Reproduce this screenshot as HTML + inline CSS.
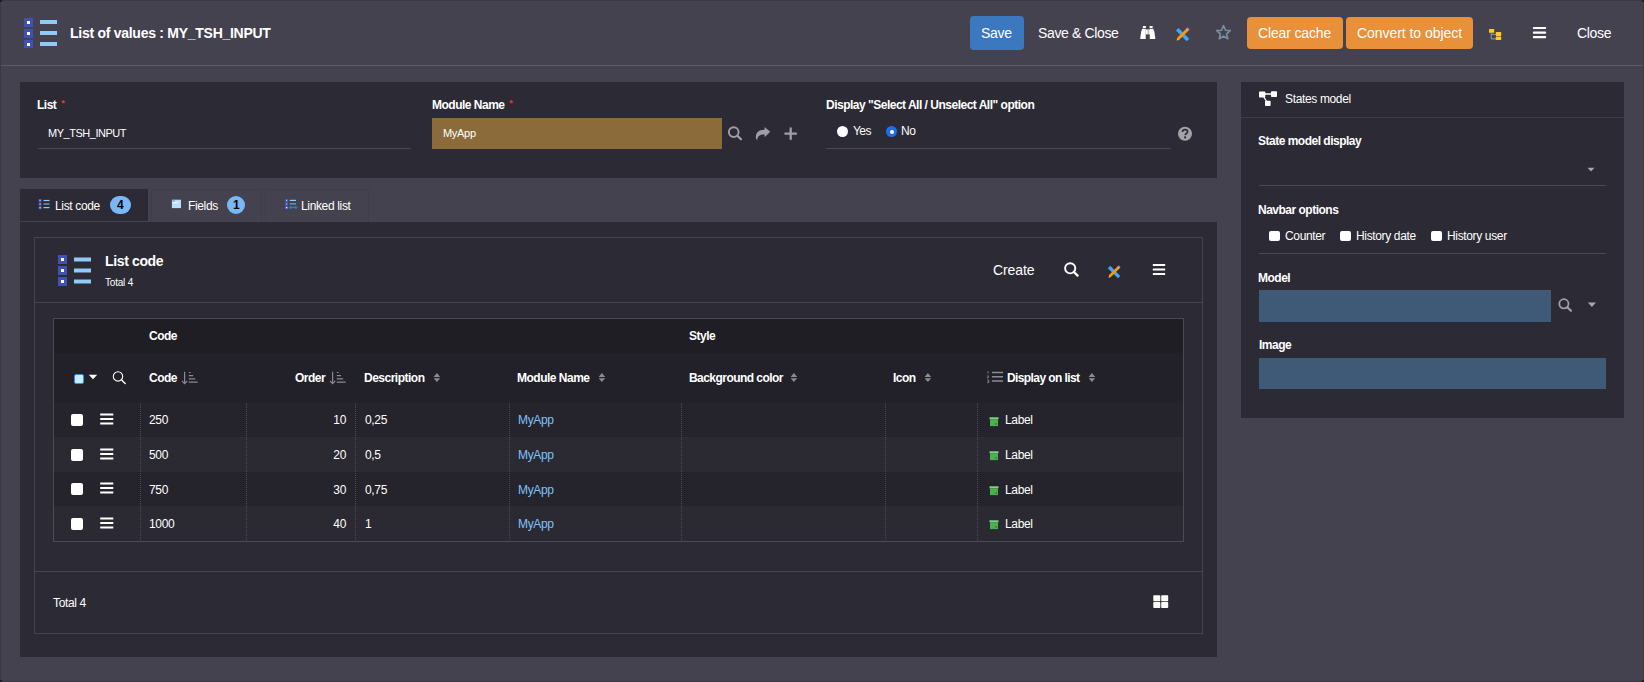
<!DOCTYPE html>
<html><head><meta charset="utf-8">
<style>
*{box-sizing:border-box;margin:0;padding:0}
html,body{width:1644px;height:682px;overflow:hidden;background:#45424f;font-family:"Liberation Sans",sans-serif;color:#fff}
.a{position:absolute}
.t{position:absolute;line-height:1;white-space:nowrap}
.b{font-weight:700}
.s12{font-size:12px;letter-spacing:-0.35px}
.b12{font-size:12px;font-weight:700;letter-spacing:-0.5px}
.s14{font-size:14px;letter-spacing:-0.3px}
.panel{position:absolute;background:#2c2a34}
.ln{position:absolute;height:1px;background:#4b4956}
.vl{position:absolute;width:1px;background:#4b4956}
.btn{position:absolute;border-radius:4px}
</style></head><body>
<div class="a" style="left:0;top:0;width:1644px;height:682px;border:1px solid #3a3843"></div>

<!-- HEADER -->
<svg class="a" style="left:24px;top:18px" width="34" height="30" viewBox="0 0 34 30">
  <rect x="0" y="0" width="9" height="9" fill="#3f51b5"/><rect x="3" y="3" width="3" height="3" fill="#fff"/>
  <rect x="0" y="11" width="9" height="9" fill="#3f51b5"/><rect x="3" y="14" width="3" height="3" fill="#fff"/>
  <rect x="0" y="22" width="9" height="9" fill="#3f51b5"/><rect x="3" y="25" width="3" height="3" fill="#fff"/>
  <rect x="16" y="2" width="17" height="4" fill="#90caf9"/>
  <rect x="16" y="13" width="17" height="4" fill="#90caf9"/>
  <rect x="16" y="24" width="17" height="4" fill="#90caf9"/>
</svg>
<div class="t b" style="left:70px;top:26px;font-size:14px;letter-spacing:-0.27px">List of values : MY_TSH_INPUT</div>

<div class="btn" style="left:970px;top:16px;width:54px;height:34px;background:#3c78c0"></div>
<div class="t s14" style="left:981px;top:26px">Save</div>
<div class="t s14" style="left:1038px;top:26px;letter-spacing:-0.36px">Save &amp; Close</div>
<div class="btn" style="left:1247px;top:17px;width:96px;height:32px;background:#e8903a"></div>
<div class="t s14" style="left:1258px;top:26px;letter-spacing:-0.15px">Clear cache</div>
<div class="btn" style="left:1346px;top:17px;width:127px;height:32px;background:#e8903a"></div>
<div class="t s14" style="left:1357px;top:26px;letter-spacing:-0.05px">Convert to object</div>
<div class="t s14" style="left:1577px;top:26px">Close</div>

<div class="ln" style="left:1px;top:65px;width:1642px;background:#5d5b68"></div>


<!-- header icons -->
<svg class="a" style="left:1140px;top:25px" width="16" height="15" viewBox="0 0 16 15">
  <rect x="2.9" y="1" width="3" height="2" fill="#fff"/>
  <rect x="9.6" y="1" width="3" height="2" fill="#fff"/>
  <path d="M2.2 3.7 L5.7 3.7 L5.7 14 L0.9 14 Q0.1 14 0.2 13 L1.2 6.5 Z" fill="#fff"/>
  <path d="M13.2 3.7 L9.8 3.7 L9.8 14 L14.6 14 Q15.4 14 15.3 13 L14.3 6.5 Z" fill="#fff"/>
  <rect x="5.6" y="4.5" width="4.3" height="4.8" fill="#fff"/>
  <rect x="7.5" y="4.5" width="1.5" height="4.8" fill="#b9b9bf"/>
</svg>
<svg class="a" style="left:1175px;top:27px" width="15" height="15" viewBox="0 0 15 15">
  <path d="M2.2 2.2 L13 13" stroke="#42a5f5" stroke-width="3.6"/>
  <path d="M3.2 11.8 L11.8 3.2" stroke="#ff9800" stroke-width="2.9"/>
  <path d="M11.6 3.4 L12.8 2.2" stroke="#b0bec5" stroke-width="2.9"/>
  <path d="M12.6 2.4 L13.6 1.4" stroke="#ef6c6c" stroke-width="2.9"/>
  <path d="M1.6 13.6 L2.3 10.8 L4.4 12.9 Z" fill="#ffc107"/>
</svg>
<svg class="a" style="left:1215px;top:24px" width="17" height="17" viewBox="0 0 17 17">
  <path d="M8.5 1.6 L10.5 6.2 L15.3 6.6 L11.6 9.8 L12.8 14.7 L8.5 12.1 L4.2 14.7 L5.4 9.8 L1.7 6.6 L6.5 6.2 Z" fill="none" stroke="#7b8fa2" stroke-width="1.6" stroke-linejoin="round"/>
</svg>
<svg class="a" style="left:1488px;top:28px" width="14" height="13" viewBox="0 0 14 13">
  <path d="M3.2 4.5 V10.9 H8 M3.2 6.3 H8" fill="none" stroke="#9aa9b8" stroke-width="0.9"/>
  <rect x="1" y="1" width="5.2" height="3.8" rx="0.6" fill="#ffc928"/>
  <rect x="7.8" y="4" width="5.4" height="3.9" rx="0.6" fill="#ffc928"/>
  <rect x="7.8" y="8.6" width="5.4" height="3.5" rx="0.6" fill="#ffc928"/>
</svg>
<svg class="a" style="left:1532px;top:26px" width="15" height="14" viewBox="0 0 15 14">
  <rect x="0.8" y="0.9" width="13.4" height="2.2" rx="1" fill="#fff"/>
  <rect x="0.8" y="5.5" width="13.4" height="2.2" rx="1" fill="#fff"/>
  <rect x="0.8" y="10" width="13.4" height="2.2" rx="1" fill="#fff"/>
</svg>

<!-- FORM PANEL -->
<div class="panel" style="left:20px;top:82px;width:1197px;height:96px"></div>
<div class="t b12" style="left:37px;top:99px">List <span style="color:#e53935;font-size:9px;vertical-align:3px;margin-left:2px">*</span></div>
<div class="t" style="left:48px;top:128px;font-size:11px;letter-spacing:-0.48px">MY_TSH_INPUT</div>
<div class="ln" style="left:38px;top:148px;width:373px"></div>
<div class="t b12" style="left:432px;top:99px">Module Name <span style="color:#e53935;font-size:9px;vertical-align:3px;margin-left:2px">*</span></div>
<div class="a" style="left:432px;top:118px;width:290px;height:31px;background:#8c6b3b"></div>
<div class="t" style="left:443px;top:128px;font-size:11px;letter-spacing:-0.3px">MyApp</div>
<div class="t b12" style="left:826px;top:99px">Display "Select All / Unselect All" option</div>
<div class="a" style="left:837px;top:126px;width:11px;height:11px;border-radius:50%;background:#fff"></div>
<div class="t s12" style="left:853px;top:125px;letter-spacing:-0.6px">Yes</div>
<div class="a" style="left:886px;top:126px;width:11px;height:11px;border-radius:50%;background:#1e6ff0"></div>
<div class="a" style="left:889.5px;top:129.5px;width:4px;height:4px;border-radius:50%;background:#fff"></div>
<div class="t s12" style="left:901px;top:125px">No</div>
<div class="ln" style="left:826px;top:148px;width:345px"></div>

<!-- RIGHT PANEL -->
<div class="panel" style="left:1241px;top:82px;width:383px;height:336px"></div>
<div class="ln" style="left:1241px;top:117px;width:383px;background:#3f3d49"></div>
<div class="t s12" style="left:1285px;top:93px">States model</div>
<div class="t b12" style="left:1258px;top:135px">State model display</div>
<div class="ln" style="left:1259px;top:185px;width:347px"></div>
<div class="t b12" style="left:1258px;top:204px">Navbar options</div>
<div class="a" style="left:1269px;top:231px;width:11px;height:10px;border-radius:2px;background:#fff"></div>
<div class="t s12" style="left:1285px;top:230px">Counter</div>
<div class="a" style="left:1340px;top:231px;width:11px;height:10px;border-radius:2px;background:#fff"></div>
<div class="t s12" style="left:1356px;top:230px">History date</div>
<div class="a" style="left:1431px;top:231px;width:11px;height:10px;border-radius:2px;background:#fff"></div>
<div class="t s12" style="left:1447px;top:230px">History user</div>
<div class="ln" style="left:1259px;top:253px;width:347px"></div>
<div class="t b12" style="left:1258px;top:272px">Model</div>
<div class="a" style="left:1259px;top:290px;width:292px;height:32px;background:#3e5a77"></div>
<div class="t b12" style="left:1259px;top:339px">Image</div>
<div class="a" style="left:1259px;top:358px;width:347px;height:31px;background:#3e5a77"></div>

<!-- TABS -->
<div class="a" style="left:20px;top:189px;width:128px;height:32px;background:#2c2a34"></div>
<div class="a" style="left:151px;top:189px;width:111px;height:33px;border:1px solid #3f3d49;border-bottom:0"></div>
<div class="a" style="left:265px;top:189px;width:104px;height:33px;border:1px solid #3f3d49;border-bottom:0"></div>
<div class="t s12" style="left:55px;top:200px">List code</div>
<div class="a" style="left:110px;top:196px;width:21px;height:18px;border-radius:9px;background:#7ab8f5"></div>
<div class="t b" style="left:117px;top:199px;font-size:12px;color:#000">4</div>
<div class="t s12" style="left:188px;top:200px">Fields</div>
<div class="a" style="left:227px;top:196px;width:18px;height:18px;border-radius:9px;background:#7ab8f5"></div>
<div class="t b" style="left:233px;top:199px;font-size:12px;color:#000">1</div>
<div class="t s12" style="left:301px;top:200px">Linked list</div>

<!-- TAB CONTENT -->
<div class="panel" style="left:20px;top:222px;width:1197px;height:435px"></div>
<div class="a" style="left:34px;top:237px;width:1169px;height:397px;border:1px solid #45434f"></div>
<div class="ln" style="left:35px;top:302px;width:1167px;background:#45434f"></div>
<div class="ln" style="left:35px;top:571px;width:1167px;background:#45434f"></div>
<div class="t b" style="left:105px;top:254px;font-size:14px;letter-spacing:-0.36px">List code</div>
<div class="t" style="left:105px;top:278px;font-size:10px;letter-spacing:-0.2px">Total 4</div>
<div class="t s14" style="left:993px;top:263px;letter-spacing:-0.1px">Create</div>
<div class="t s12" style="left:53px;top:597px">Total 4</div>

<!-- TABLE -->
<div class="a" style="left:53px;top:318px;width:1131px;height:224px;border:1px solid #4b4956;background:#25242c"></div>
<div class="a" style="left:54px;top:319px;width:1129px;height:34px;background:#1f1e25"></div>
<div class="a" style="left:54px;top:353px;width:1129px;height:50px;background:#222129"></div>
<div class="a" style="left:54px;top:437px;width:1129px;height:35px;background:#2b2a33"></div>
<div class="a" style="left:54px;top:506px;width:1129px;height:35px;background:#2b2a33"></div>
<div class="t b12" style="left:149px;top:330px">Code</div>
<div class="t b12" style="left:689px;top:330px">Style</div>
<div class="t b12" style="left:149px;top:372px">Code</div>
<div class="t b12" style="left:295px;top:372px">Order</div>
<div class="t b12" style="left:364px;top:372px">Description</div>
<div class="t b12" style="left:517px;top:372px">Module Name</div>
<div class="t b12" style="left:689px;top:372px;letter-spacing:-0.55px">Background color</div>
<div class="t b12" style="left:893px;top:372px">Icon</div>
<div class="t b12" style="left:1007px;top:372px;letter-spacing:-0.6px">Display on list</div>

<!-- TABLE BODY -->
<div class="a" style="left:140px;top:403px;width:1px;height:138px;background:repeating-linear-gradient(to bottom,#4d4b58 0 1px,transparent 1px 2px)"></div>
<div class="a" style="left:246px;top:403px;width:1px;height:138px;background:repeating-linear-gradient(to bottom,#4d4b58 0 1px,transparent 1px 2px)"></div>
<div class="a" style="left:355px;top:403px;width:1px;height:138px;background:repeating-linear-gradient(to bottom,#4d4b58 0 1px,transparent 1px 2px)"></div>
<div class="a" style="left:509px;top:403px;width:1px;height:138px;background:repeating-linear-gradient(to bottom,#4d4b58 0 1px,transparent 1px 2px)"></div>
<div class="a" style="left:681px;top:403px;width:1px;height:138px;background:repeating-linear-gradient(to bottom,#4d4b58 0 1px,transparent 1px 2px)"></div>
<div class="a" style="left:885px;top:403px;width:1px;height:138px;background:repeating-linear-gradient(to bottom,#4d4b58 0 1px,transparent 1px 2px)"></div>
<div class="a" style="left:977px;top:403px;width:1px;height:138px;background:repeating-linear-gradient(to bottom,#4d4b58 0 1px,transparent 1px 2px)"></div>
<div class="a" style="left:74px;top:374px;width:10px;height:10px;border:1.5px solid #2196f3;border-radius:2px;background:#cfeafc"></div>
<svg class="a" style="left:88px;top:374px" width="10" height="6" viewBox="0 0 10 6"><path d="M0.8 0.8 H9.2 L5 5.2 Z" fill="#fff"/></svg>
<svg class="a" style="left:111px;top:370px" width="16" height="16" viewBox="0 0 16 16">
  <circle cx="7" cy="6.4" r="4.7" fill="none" stroke="#fff" stroke-width="1.1"/>
  <path d="M10.6 9.9 L14.2 13.5" stroke="#fff" stroke-width="1.4" stroke-linecap="round"/>
</svg>
<svg class="a" style="left:181px;top:371px" width="17" height="14" viewBox="0 0 17 14">
  <path d="M3.6 0.8 V12.6 M0.9 9.8 L3.6 12.6 L6.3 9.8" fill="none" stroke="#8a8990" stroke-width="1.2"/>
  <path d="M7.8 1.5 H9.6 M7.8 4.6 H12.1 M7.8 7.9 H14.2 M7.8 11.2 H16.7" stroke="#8a8990" stroke-width="1.2"/>
</svg>
<svg class="a" style="left:329px;top:371px" width="17" height="14" viewBox="0 0 17 14">
  <path d="M3.6 0.8 V12.6 M0.9 9.8 L3.6 12.6 L6.3 9.8" fill="none" stroke="#8a8990" stroke-width="1.2"/>
  <path d="M7.8 1.5 H9.6 M7.8 4.6 H12.1 M7.8 7.9 H14.2 M7.8 11.2 H16.7" stroke="#8a8990" stroke-width="1.2"/>
</svg>
<svg class="a" style="left:433px;top:372px" width="8" height="11" viewBox="0 0 8 11">
  <path d="M0.6 4.9 L3.9 0.9 L7.2 4.9 Z M0.6 6.2 L3.9 10.1 L7.2 6.2 Z" fill="#8d8c93"/>
</svg>
<svg class="a" style="left:598px;top:372px" width="8" height="11" viewBox="0 0 8 11">
  <path d="M0.6 4.9 L3.9 0.9 L7.2 4.9 Z M0.6 6.2 L3.9 10.1 L7.2 6.2 Z" fill="#8d8c93"/>
</svg>
<svg class="a" style="left:790px;top:372px" width="8" height="11" viewBox="0 0 8 11">
  <path d="M0.6 4.9 L3.9 0.9 L7.2 4.9 Z M0.6 6.2 L3.9 10.1 L7.2 6.2 Z" fill="#8d8c93"/>
</svg>
<svg class="a" style="left:924px;top:372px" width="8" height="11" viewBox="0 0 8 11">
  <path d="M0.6 4.9 L3.9 0.9 L7.2 4.9 Z M0.6 6.2 L3.9 10.1 L7.2 6.2 Z" fill="#8d8c93"/>
</svg>
<svg class="a" style="left:1088px;top:372px" width="8" height="11" viewBox="0 0 8 11">
  <path d="M0.6 4.9 L3.9 0.9 L7.2 4.9 Z M0.6 6.2 L3.9 10.1 L7.2 6.2 Z" fill="#8d8c93"/>
</svg>
<svg class="a" style="left:986px;top:370px" width="18" height="14" viewBox="0 0 18 14">
  <path d="M2 1 V3.6 M1.2 6 H2.8 L1.2 8 H2.8 M1.2 10.2 H2.8 V12.6 H1.2 M1.6 11.4 H2.8" fill="none" stroke="#8c8b92" stroke-width="0.8"/>
  <path d="M5.9 2.5 H17 M5.9 6.8 H17 M5.9 11.1 H17" stroke="#8c8b92" stroke-width="1.5"/>
</svg>
<div class="a" style="left:71px;top:414px;width:12px;height:12px;border-radius:2px;background:#fff"></div>
<svg class="a" style="left:100px;top:413px" width="14" height="13" viewBox="0 0 14 13"><path d="M0.2 1.6 H13.3 M0.2 6.1 H13.3 M0.2 10.6 H13.3" stroke="#fff" stroke-width="2"/></svg>
<div class="t s12" style="left:149px;top:414px">250</div>
<div class="t s12" style="left:246px;width:100px;text-align:right;top:414px">10</div>
<div class="t s12" style="left:365px;top:414px">0,25</div>
<div class="t s12" style="left:518px;top:414px;color:#7fc2f8">MyApp</div>
<svg class="a" style="left:989px;top:417px" width="10" height="10" viewBox="0 0 10 10">
  <rect x="0.5" y="0.3" width="9" height="2" fill="#81d28a"/>
  <rect x="1" y="2.3" width="8" height="6.8" fill="#4caf50"/>
  <rect x="6.3" y="6.2" width="1.6" height="1.6" fill="#2e7d32"/>
</svg>
<div class="t s12" style="left:1005px;top:414px">Label</div>
<div class="a" style="left:71px;top:449px;width:12px;height:12px;border-radius:2px;background:#fff"></div>
<svg class="a" style="left:100px;top:448px" width="14" height="13" viewBox="0 0 14 13"><path d="M0.2 1.6 H13.3 M0.2 6.1 H13.3 M0.2 10.6 H13.3" stroke="#fff" stroke-width="2"/></svg>
<div class="t s12" style="left:149px;top:449px">500</div>
<div class="t s12" style="left:246px;width:100px;text-align:right;top:449px">20</div>
<div class="t s12" style="left:365px;top:449px">0,5</div>
<div class="t s12" style="left:518px;top:449px;color:#7fc2f8">MyApp</div>
<svg class="a" style="left:989px;top:451px" width="10" height="10" viewBox="0 0 10 10">
  <rect x="0.5" y="0.3" width="9" height="2" fill="#81d28a"/>
  <rect x="1" y="2.3" width="8" height="6.8" fill="#4caf50"/>
  <rect x="6.3" y="6.2" width="1.6" height="1.6" fill="#2e7d32"/>
</svg>
<div class="t s12" style="left:1005px;top:449px">Label</div>
<div class="a" style="left:71px;top:483px;width:12px;height:12px;border-radius:2px;background:#fff"></div>
<svg class="a" style="left:100px;top:482px" width="14" height="13" viewBox="0 0 14 13"><path d="M0.2 1.6 H13.3 M0.2 6.1 H13.3 M0.2 10.6 H13.3" stroke="#fff" stroke-width="2"/></svg>
<div class="t s12" style="left:149px;top:484px">750</div>
<div class="t s12" style="left:246px;width:100px;text-align:right;top:484px">30</div>
<div class="t s12" style="left:365px;top:484px">0,75</div>
<div class="t s12" style="left:518px;top:484px;color:#7fc2f8">MyApp</div>
<svg class="a" style="left:989px;top:486px" width="10" height="10" viewBox="0 0 10 10">
  <rect x="0.5" y="0.3" width="9" height="2" fill="#81d28a"/>
  <rect x="1" y="2.3" width="8" height="6.8" fill="#4caf50"/>
  <rect x="6.3" y="6.2" width="1.6" height="1.6" fill="#2e7d32"/>
</svg>
<div class="t s12" style="left:1005px;top:484px">Label</div>
<div class="a" style="left:71px;top:518px;width:12px;height:12px;border-radius:2px;background:#fff"></div>
<svg class="a" style="left:100px;top:517px" width="14" height="13" viewBox="0 0 14 13"><path d="M0.2 1.6 H13.3 M0.2 6.1 H13.3 M0.2 10.6 H13.3" stroke="#fff" stroke-width="2"/></svg>
<div class="t s12" style="left:149px;top:518px">1000</div>
<div class="t s12" style="left:246px;width:100px;text-align:right;top:518px">40</div>
<div class="t s12" style="left:365px;top:518px">1</div>
<div class="t s12" style="left:518px;top:518px;color:#7fc2f8">MyApp</div>
<svg class="a" style="left:989px;top:520px" width="10" height="10" viewBox="0 0 10 10">
  <rect x="0.5" y="0.3" width="9" height="2" fill="#81d28a"/>
  <rect x="1" y="2.3" width="8" height="6.8" fill="#4caf50"/>
  <rect x="6.3" y="6.2" width="1.6" height="1.6" fill="#2e7d32"/>
</svg>
<div class="t s12" style="left:1005px;top:518px">Label</div>

<!-- form icons -->
<svg class="a" style="left:726px;top:125px" width="18" height="17" viewBox="0 0 18 17">
  <circle cx="7.7" cy="7.1" r="4.9" fill="none" stroke="#a09fa6" stroke-width="1.9"/>
  <path d="M11.3 10.7 L15 14.3" stroke="#a09fa6" stroke-width="2.3" stroke-linecap="round"/>
</svg>
<svg class="a" style="left:755px;top:126px" width="17" height="15" viewBox="0 0 17 15">
  <path d="M15.2 5.8 L9.6 1 L9.6 3.7 C4.5 3.7 0.8 5.8 0.8 11.6 C0.8 12.8 1.5 13.9 2.3 13.9 C2.6 10 5 8.6 9.6 8.6 L9.6 11.3 Z" fill="#a09fa6"/>
</svg>
<svg class="a" style="left:783px;top:126px" width="16" height="16" viewBox="0 0 16 16">
  <path d="M7.7 2.4 V13 M2.4 7.7 H13" stroke="#a09fa6" stroke-width="2.3" stroke-linecap="round"/>
</svg>
<svg class="a" style="left:1177px;top:126px" width="16" height="16" viewBox="0 0 16 16">
  <circle cx="8" cy="7.8" r="7" fill="#a3a2a9"/>
  <path d="M5.4 5.9 C5.4 4.3 6.5 3.6 8 3.6 C9.6 3.6 10.6 4.5 10.6 5.7 C10.6 7.4 8.5 7.4 8.2 9.2" fill="none" stroke="#2c2a34" stroke-width="1.7"/>
  <circle cx="8.1" cy="11.4" r="1.1" fill="#2c2a34"/>
</svg>


<!-- right panel icons -->
<svg class="a" style="left:1258px;top:90px" width="20" height="17" viewBox="0 0 20 17">
  <path d="M4 4 H16 M4 4 L9.5 13" stroke="#fff" stroke-width="1.3"/>
  <rect x="1" y="1.5" width="6.3" height="6" rx="0.8" fill="#fff"/>
  <rect x="13" y="1.2" width="6" height="5.8" rx="0.8" fill="#fff"/>
  <rect x="7" y="10.7" width="5.6" height="5.3" rx="0.8" fill="#fff"/>
</svg>
<svg class="a" style="left:1587px;top:167px" width="8" height="5" viewBox="0 0 8 5"><path d="M0.5 0.8 H7.5 L4 4.5 Z" fill="#a8a7ae"/></svg>
<svg class="a" style="left:1557px;top:297px" width="17" height="17" viewBox="0 0 17 17">
  <circle cx="6.9" cy="6.8" r="4.6" fill="none" stroke="#a09fa6" stroke-width="1.8"/>
  <path d="M10.3 10.2 L14 13.8" stroke="#a09fa6" stroke-width="2.2" stroke-linecap="round"/>
</svg>
<svg class="a" style="left:1587px;top:302px" width="10" height="6" viewBox="0 0 10 6"><path d="M0.8 0.5 H9 L4.9 5 Z" fill="#a8a7ae"/></svg>

<!-- tab icons -->
<svg class="a" style="left:38px;top:198px" width="12" height="12" viewBox="0 0 12 12">
  <rect x="0.6" y="1" width="3" height="3" fill="#3f51b5"/><rect x="1.4" y="1.8" width="1.4" height="1.4" fill="#9fa8da"/>
  <rect x="0.6" y="4.6" width="3" height="3" fill="#3f51b5"/><rect x="1.4" y="5.4" width="1.4" height="1.4" fill="#9fa8da"/>
  <rect x="0.6" y="8.2" width="3" height="3" fill="#3f51b5"/><rect x="1.4" y="9" width="1.4" height="1.4" fill="#c5cae9"/>
  <rect x="5.5" y="1.9" width="6" height="1.2" fill="#90caf9"/>
  <rect x="5.5" y="5.1" width="6" height="1.8" fill="#64869e"/>
  <rect x="5.5" y="9" width="6" height="1.2" fill="#90caf9"/>
</svg>
<svg class="a" style="left:171px;top:199px" width="11" height="10" viewBox="0 0 11 10">
  <rect x="0.9" y="0.7" width="9.1" height="8.4" fill="#bbdefb"/>
  <rect x="1.5" y="1.4" width="2" height="1" fill="#1e88e5"/>
  <rect x="1.6" y="3.3" width="5.8" height="0.9" fill="#fff"/>
</svg>
<svg class="a" style="left:284px;top:198px" width="14" height="12" viewBox="0 0 14 12">
  <rect x="1" y="1" width="3" height="10.2" fill="#3f51b5"/>
  <rect x="1.9" y="1.8" width="1.3" height="1.3" fill="#90caf9"/>
  <rect x="1.9" y="5.4" width="1.3" height="1.3" fill="#9fa8da"/>
  <rect x="1.9" y="9" width="1.3" height="1.3" fill="#fff"/>
  <rect x="5.8" y="1.8" width="6.2" height="1.2" fill="#90caf9"/>
  <rect x="5.8" y="5" width="6.2" height="1.8" fill="#64869e"/>
  <path d="M5.6 9.4 H12.6" stroke="#1e88e5" stroke-width="1"/>
  <rect x="5.2" y="8.6" width="2.6" height="1.8" rx="0.9" fill="none" stroke="#1e88e5" stroke-width="0.8"/>
  <rect x="10.4" y="8.6" width="2.6" height="1.8" rx="0.9" fill="none" stroke="#1e88e5" stroke-width="0.8"/>
</svg>

<!-- list code big icon -->
<svg class="a" style="left:58px;top:255px" width="34" height="32" viewBox="0 0 34 32">
  <rect x="0" y="0" width="9" height="9" fill="#3f51b5"/><rect x="3" y="3" width="3" height="3" fill="#fff"/>
  <rect x="0" y="11" width="9" height="9" fill="#3f51b5"/><rect x="3" y="14" width="3" height="3" fill="#fff"/>
  <rect x="0" y="22" width="9" height="9" fill="#3f51b5"/><rect x="3" y="25" width="3" height="3" fill="#fff"/>
  <rect x="16" y="2.5" width="17" height="4" fill="#90caf9"/>
  <rect x="16" y="13.5" width="17" height="4" fill="#90caf9"/>
  <rect x="16" y="24.5" width="17" height="4" fill="#90caf9"/>
</svg>
<!-- list toolbar icons -->
<svg class="a" style="left:1062px;top:261px" width="18" height="18" viewBox="0 0 18 18">
  <circle cx="8.2" cy="7.3" r="5.1" fill="none" stroke="#fff" stroke-width="1.9"/>
  <path d="M11.9 11 L15.6 14.6" stroke="#fff" stroke-width="2.3" stroke-linecap="round"/>
</svg>
<svg class="a" style="left:1107px;top:265px" width="14" height="14" viewBox="0 0 15 15">
  <path d="M2.2 2.2 L13 13" stroke="#42a5f5" stroke-width="3.6"/>
  <path d="M3.2 11.8 L11.8 3.2" stroke="#ff9800" stroke-width="2.9"/>
  <path d="M11.6 3.4 L12.8 2.2" stroke="#b0bec5" stroke-width="2.9"/>
  <path d="M12.6 2.4 L13.6 1.4" stroke="#ef6c6c" stroke-width="2.9"/>
  <path d="M1.6 13.6 L2.3 10.8 L4.4 12.9 Z" fill="#ffc107"/>
</svg>
<svg class="a" style="left:1152px;top:263px" width="14" height="14" viewBox="0 0 14 14">
  <rect x="0.8" y="1" width="12.4" height="2" rx="0.6" fill="#fff"/>
  <rect x="0.8" y="5.6" width="12.4" height="2" rx="0.6" fill="#fff"/>
  <rect x="0.8" y="10.1" width="12.4" height="2" rx="0.6" fill="#fff"/>
</svg>
<!-- grid icon -->
<svg class="a" style="left:1153px;top:595px" width="16" height="14" viewBox="0 0 16 14">
  <rect x="0.3" y="0.2" width="7" height="6" rx="0.8" fill="#fff"/>
  <rect x="8.2" y="0.2" width="7" height="6" rx="0.8" fill="#fff"/>
  <rect x="0.3" y="7" width="7" height="6" rx="0.8" fill="#fff"/>
  <rect x="8.2" y="7" width="7" height="6" rx="0.8" fill="#fff"/>
</svg>
<div class="a" style="left:0;top:0;width:2px;height:2px;background:#1e1d24"></div>
<div class="a" style="left:1642px;top:0;width:2px;height:2px;background:#1e1d24"></div>
<div class="a" style="left:0;top:680px;width:2px;height:2px;background:#1e1d24"></div>
<div class="a" style="left:1642px;top:680px;width:2px;height:2px;background:#1e1d24"></div>
</body></html>
